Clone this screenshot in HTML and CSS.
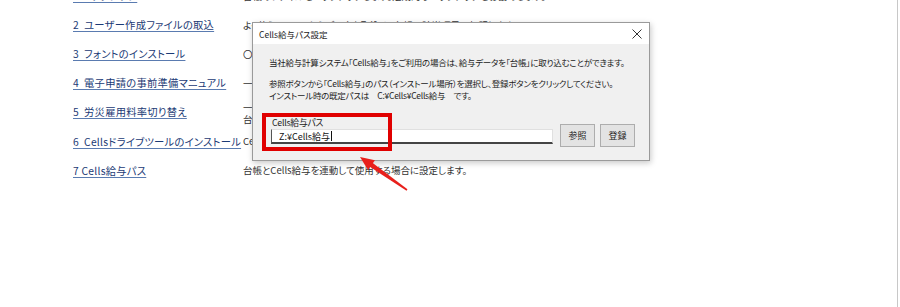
FILE: index.html
```html
<!DOCTYPE html>
<html lang="ja">
<head>
<meta charset="utf-8">
<link rel="stylesheet" href="styles.css">
</head>
<body>
<div class="page">
  <div class="menu">
    <div class="row"><a class="link">1 バックアップ</a><span class="desc">台帳のファイルをバックアップします。定期的なバックアップをお勧めします。</span></div>
    <div class="row"><a class="link">2&nbsp; ユーザー作成ファイルの取込</a><span class="desc">よく使うファイルからデータを取込み、台帳の該当項目に転記します。</span></div>
    <div class="row"><a class="link">3&nbsp; フォントのインストール</a><span class="desc">〇〇フォントをインストールします。</span></div>
    <div class="row"><a class="link">4&nbsp; 電子申請の事前準備マニュアル</a><span class="desc">一括電子申請の事前準備について説明します。</span></div>
    <div class="row"><a class="link">5&nbsp; 労災雇用料率切り替え</a><span class="desc two">一年度ごとに労災・雇用保険料率を切り替えます。<br>台帳の設定を更新します。</span></div>
    <div class="row"><a class="link">6&nbsp; Cellsドライブツールのインストール</a><span class="desc">Cellsドライブツールをインストールします。</span></div>
    <div class="row"><a class="link">7 Cells給与パス</a><span class="desc">台帳とCells給与を連動して使用する場合に設定します。</span></div>
  </div>

  <div class="dialog">
    <div class="titlebar">
      <span class="title">Cells給与パス設定</span>
      <svg class="close" width="10" height="10" viewBox="0 0 10 10"><path d="M0.5 0.5 L9.5 9.5 M9.5 0.5 L0.5 9.5" stroke="#333" stroke-width="1" fill="none"/></svg>
    </div>
    <div class="body">
      <p class="msg first">当社給与計算システム「Cells給与」をご利用の場合は、給与データを「台帳」に取り込むことができます。</p>
      <p class="msg">参照ボタンから「Cells給与」のパス（インストール場所）を選択し、登録ボタンをクリックしてください。<br>インストール時の既定パスは　C:¥Cells¥Cells給与　です。</p>
      <div class="pathrow">
        <div class="field">
          <label class="label">Cells給与パス</label>
          <div class="input"><span class="value">Z:¥Cells給与</span><span class="caret"></span></div>
        </div>
        <button class="btn">参照</button>
        <button class="btn">登録</button>
      </div>
    </div>
  </div>

  <div class="highlight"></div>
  <svg class="arrow" width="56" height="42" viewBox="0 0 56 42">
    <polygon points="13.6,14 16.4,10 52.46,37.34 51.54,38.66" fill="#e8201c"/>
    <polygon points="5,5 13.05,17.96 19.95,8.14" fill="#e8201c"/>
  </svg>
  <div class="scrollbar"></div>
</div>
</body>
</html>
```
FILE: styles.css
```css
html, body {
  margin: 0;
  padding: 0;
  background: #ffffff;
}
body {
  font-family: "Noto Sans CJK JP", "Noto Sans", sans-serif;
  font-feature-settings: "palt";
  width: 900px;
  height: 307px;
  overflow: hidden;
}
.page {
  position: relative;
  display: flow-root;
  width: 900px;
  height: 307px;
}
.menu {
  display: flex;
  flex-direction: column;
  padding-left: 73px;
  margin-top: -19px;
}
.row {
  display: grid;
  grid-template-columns: 170px 1fr;
  align-items: center;
  height: 29.1px;
}
.link {
  font-size: 10.3px;
  color: #1b3a75;
  text-decoration: underline;
  text-decoration-color: #5a7bb0;
  text-underline-offset: 2px;
  white-space: nowrap;
  letter-spacing: 0.25px;
}
.desc {
  font-size: 9.5px;
  color: #333;
  white-space: nowrap;
}
.desc.two {
  line-height: 12px;
  padding-top: 3px;
}
.dialog {
  position: absolute;
  left: 252px;
  top: 22px;
  width: 396px;
  height: 137px;
  border: 1px solid #9a9a9a;
  background: #f0f0f0;
  box-shadow: 1px 2px 6px rgba(0,0,0,0.22);
  display: flex;
  flex-direction: column;
}
.titlebar {
  height: 21px;
  background: #ffffff;
  display: flex;
  align-items: center;
  justify-content: space-between;
  padding: 0 7px 0 6px;
  flex: none;
}
.title {
  font-size: 8.5px;
  color: #222;
}
.close {
  display: block;
}
.body {
  padding: 12px 14px 0 16px;
  font-size: 8.5px;
  letter-spacing: -0.25px;
  color: #222;
}
.msg {
  margin: 0 0 8px;
  line-height: 12px;
  white-space: nowrap;
}
.msg.first {
  margin-bottom: 9px;
}
.pathrow {
  display: flex;
  align-items: flex-end;
  gap: 5px;
  margin-top: 16px;
}
.field {
  display: flex;
  flex-direction: column;
  margin-left: 2px;
}
.label {
  font-size: 8.8px;
  line-height: 11px;
  color: #222;
  padding-left: 1px;
  margin-bottom: 1px;
}
.input {
  width: 273px;
  height: 12px;
  background: #fff;
  border-left: 1px solid #555;
  border-bottom: 2px solid #444;
  border-top: 1px solid #e0e0e0;
  border-right: 1px solid #e0e0e0;
  display: flex;
  align-items: center;
  padding-left: 7px;
  margin-bottom: 3px;
}
.value {
  font-size: 9px;
  color: #111;
  letter-spacing: 0;
}
.caret {
  width: 1px;
  height: 10px;
  background: #111;
  margin-left: 1px;
}
.btn {
  font-family: inherit;
  font-size: 9px;
  color: #222;
  width: 35px;
  height: 23px;
  background: #e3e3e3;
  border: 1px solid #adadad;
  padding: 0;
}
.field + .btn {
  margin-left: 2px;
}
.highlight {
  position: absolute;
  left: 262px;
  top: 113px;
  width: 122px;
  height: 30px;
  border: 4px solid #e00000;
}
.arrow {
  position: absolute;
  left: 355px;
  top: 152px;
}
.scrollbar {
  position: absolute;
  right: 2px;
  top: 0;
  width: 1px;
  height: 307px;
  background: #c8c8c8;
}
```
